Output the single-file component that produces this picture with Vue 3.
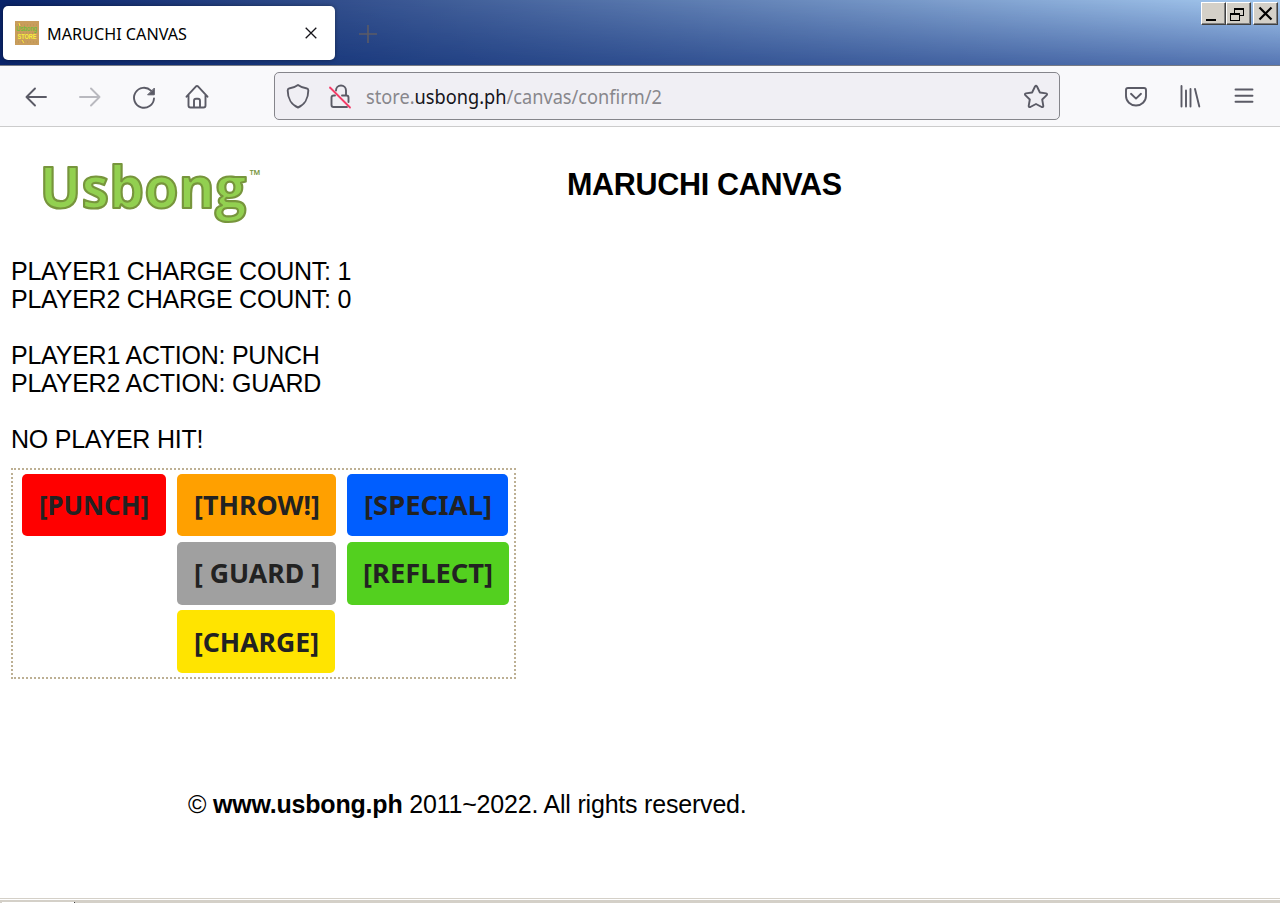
<script setup>
const status = [
  'PLAYER1 CHARGE COUNT: 1',
  'PLAYER2 CHARGE COUNT: 0',
  '',
  'PLAYER1 ACTION: PUNCH',
  'PLAYER2 ACTION: GUARD',
  '',
  'NO PLAYER HIT!',
]
const actions = [
  { id: 'punch', label: '[PUNCH]', width: 110 },
  { id: 'throw', label: '[THROW!]', width: 126 },
  { id: 'special', label: '[SPECIAL]', width: 128 },
  { id: 'guard', label: '[ GUARD ]', width: 126 },
  { id: 'reflect', label: '[REFLECT]', width: 130 },
  { id: 'charge', label: '[CHARGE]', width: 125 },
]
</script>

<template>
  <div class="window">
    <header class="titlebar">
      <div class="tab">
        <svg class="favicon" width="24" height="24" viewBox="0 0 24 24">
          <rect width="24" height="24" fill="#c99d5c" />
          <path d="M0 4h24M2 12h20M0 21h24" stroke="#b9924f" stroke-dasharray="1 2" />
          <text x="1" y="10" font-size="8" textLength="21" lengthAdjust="spacingAndGlyphs" fill="#55c531">Usbong</text>
          <text x="2.500" y="18" font-size="8" font-weight="700" textLength="19" lengthAdjust="spacingAndGlyphs" fill="#f8f03a">STORE</text>
          <path d="M4 2l1 3M7 19l2 3" stroke="#f8e83a" />
        </svg>
        <svg class="tab-title" width="144" height="26"><text x="0" y="20" textLength="140" lengthAdjust="spacingAndGlyphs">MARUCHI CANVAS</text></svg>
        <svg class="tab-close" width="12" height="12" viewBox="0 0 12 12"><path d="M.7.7l10.600 10.600M11.300.7L.7 11.300" stroke="#15141a" stroke-width="1.300" /></svg>
      </div>
      <svg class="new-tab" width="18" height="18" viewBox="0 0 18 18"><path d="M9 0v18M0 9h18" stroke="#5b5b66" stroke-width="1.600" /></svg>
      <div class="controls">
        <span class="control"><svg width="23" height="21"><path d="M4 16h10v2H4z" /></svg></span>
        <span class="control"><svg width="23" height="21" shape-rendering="crispEdges"><path d="M7 5h10v2H7zM7 7h1v3H7zM16 7h1v6h-1zM13 12h4v1h-4zM3 10h10v2H3zM3 12h1v6H3zM12 12h1v6h-1zM3 17h10v1H3z" /></svg></span>
        <span class="control close"><svg width="23" height="21"><path d="M5.500 4.500l12 12M17.500 4.500l-12 12" stroke="#000" stroke-width="2.200" /></svg></span>
      </div>
    </header>

    <nav class="toolbar">
      <div class="nav-icons">
        <svg width="24" height="24" viewBox="0 0 24 24"><path d="M22 12H2.500M11 3.500L2.500 12l8.500 8.500" /></svg>
        <svg class="disabled" width="24" height="24" viewBox="0 0 24 24"><path d="M2 12h19.500M13 3.500l8.500 8.500-8.500 8.500" /></svg>
        <svg width="24" height="24" viewBox="0 0 24 24"><path d="M22 13.500A10 10 0 1 1 19 5.600" /><path d="M22.300 3.500v6.300H16z" class="solid" /></svg>
        <svg class="home" width="24" height="24" viewBox="0 0 24 24"><path d="M1.500 11.700L10.800 1.600q1.200-1 2.400 0l9.300 10.100M3.500 10.200v10.300q0 2 2 2h13q2 0 2-2V10.200M9 22v-6.200q0-2 2-2h2q2 0 2 2V22" /></svg>
      </div>
      <div class="address">
        <svg width="24" height="26" viewBox="0 0 24 26"><path d="M12 2q-4 3-9 3.500Q1.700 5.700 1.700 7.500c0 8 4 14.500 10.300 17 6.300-2.500 10.300-9 10.300-17 0-1.800-1.300-2-1.300-2Q16 5 12 2z" /></svg>
        <svg class="lock" width="24" height="26" viewBox="0 0 24 26"><path d="M8 7.500a5 5 0 0 1 10 0v4.500M14 12.500h4.500q2 0 2 2V19M7 12.500H6q-2.500 0-2.500 2V22q0 2 2 2H19" /><path d="M2 4.500l20 20" class="slash" /></svg>
        <svg class="url" width="300" height="32"><text x="0" y="24" textLength="296" lengthAdjust="spacingAndGlyphs">store.<tspan fill="#15141a">usbong.ph</tspan>/canvas/confirm/2</text></svg>
        <svg class="star" width="26" height="26" viewBox="0 0 26 26"><path d="M12 3.500q1-1.500 2 0l2.900 6 6.200.9q1.600.4.600 1.700l-4.500 4.400 1.100 6.400q0 1.600-1.600 1.100L13 21l-5.700 3q-1.600.5-1.600-1.100l1.100-6.400-4.500-4.400q-1-1.300.6-1.700l6.200-.9z" /></svg>
      </div>
      <div class="menu-icons">
        <svg width="24" height="24" viewBox="0 0 24 24"><path d="M4 4h16q2 0 2 2v6a10 9.500 0 0 1-20 0V6q0-2 2-2zM7 9.800l5 4.800 5-4.800" /></svg>
        <svg width="24" height="24" viewBox="0 0 24 24"><path d="M3.500 2v20.500M8 6.500v16M12.500 5v17.500M17 5l4.300 17.500" /></svg>
        <svg width="24" height="24" viewBox="0 0 24 24"><path d="M3.500 5.500h17M3.500 11.700h17M3.500 17.800h17" /></svg>
      </div>
    </nav>

    <main class="page">
      <div class="masthead">
        <svg class="logo" width="244" height="90">
          <text class="wordmark" x="19.500" y="63" textLength="207" lengthAdjust="spacingAndGlyphs">Usbong</text>
          <text class="trademark" x="229.500" y="35" textLength="11" lengthAdjust="spacingAndGlyphs">™</text>
        </svg>
        <h1>MARUCHI CANVAS</h1>
      </div>
      <div class="status">
        <p v-for="(line, i) in status" :key="i">{{ line }}</p>
      </div>
      <div class="actions">
        <button v-for="a in actions" :key="a.id" :class="['action', a.id]">
          <svg :width="a.width" height="38"><text x="0" y="29" :textLength="a.width" lengthAdjust="spacingAndGlyphs" xml:space="preserve">{{ a.label }}</text></svg>
        </button>
      </div>
      <footer>© <b>www.usbong.ph</b> 2011~2022. All rights reserved.</footer>
    </main>
    <div class="taskbar"><span></span></div>
  </div>
</template>

<style>
body { margin: 0; overflow: hidden; }
</style>

<style scoped>
* { box-sizing: border-box; }
svg { display: block; flex: none; overflow: visible; }
.window { width: 1280px; height: 903px; display: flex; flex-direction: column; overflow: hidden; background: #fff; font-family: "Liberation Sans", Arial, sans-serif; color: #000; }
.titlebar { position: relative; isolation: isolate; height: 66px; flex: none; display: flex; align-items: flex-start; border-bottom: 1px solid #777b85; background: linear-gradient(90deg, #0a246a, #a6caf0); }
.titlebar::before { content: ""; position: absolute; inset: 0; z-index: -1; background: linear-gradient(90deg, #0a246a, #1b3a7d 26%, #5575b2); mask-image: linear-gradient(transparent, #000); }
.tab { width: 332px; height: 54px; margin: 6px 0 0 3px; padding: 0 18.500px 0 12px; display: flex; align-items: center; background: #fff; border-radius: 5px; box-shadow: 0 0 4px #0006; }
.tab-title { margin-left: 8px; font: 16.500px "Noto Sans", sans-serif; }
.tab-close { margin-left: auto; }
.new-tab { margin: 25px 0 0 23.500px; }
.controls { display: flex; margin: 2px 2px 0 auto; }
.control { width: 25px; height: 23px; background: #d4d0c8; border: 1px solid; border-color: #fff #404040 #404040 #fff; box-shadow: inset -1px -1px #808080; }
.control.close { margin-left: 2px; }
.toolbar { height: 61px; flex: none; display: flex; align-items: center; background: #f9f9fb; border-bottom: 1px solid #ccc; }
.toolbar svg path { fill: none; stroke: #5b5b66; stroke-width: 1.900; stroke-linecap: round; stroke-linejoin: round; }
.toolbar svg path.solid { fill: #5b5b66; stroke-width: 1; }
.nav-icons { display: flex; gap: 30px; margin-left: 24px; padding-top: 2px; }
.nav-icons .disabled { opacity: .4; }
.nav-icons .home { margin-left: -1px; }
.address { width: 786px; height: 48px; margin: 0 0 1px 65px; padding: 0 10px 0 11px; border: 1px solid #85858b; border-radius: 5px; background: #f0eff4; display: flex; align-items: center; }
.lock { margin-left: 18px; }
.toolbar .lock path.slash { stroke: #f43b67; stroke-width: 1.800; }
.url { margin-left: 14px; font: 20px "Noto Sans", sans-serif; }
.url text { fill: #88878c; }
.star { margin-left: auto; }
.menu-icons { display: flex; gap: 30px; margin-left: 64px; }
.page { flex: 1; padding: 18px 11px 0; }
.masthead { display: flex; height: 112px; }
.logo { margin-left: 9px; }
.wordmark { font: 700 57.500px "Open Sans", sans-serif; fill: #92d050; stroke: #77953c; stroke-width: 2.200; stroke-linejoin: round; }
.trademark { font: 700 14px "Open Sans", sans-serif; fill: #77953c; }
h1 { margin: 21px 0 0 303px; font-size: 30.500px; line-height: 36px; letter-spacing: -.3px; white-space: nowrap; }
.status { font-size: 25px; line-height: 28px; letter-spacing: -.23px; }
.status p { margin: 0; height: 28px; }
.actions { width: 505px; height: 211px; margin-top: 15px; padding: 4px 0 0 9px; border: 2px dotted #bdb094; display: grid; grid-template-columns: 144px 159px 162px; grid-template-rows: 62px 63px 63px; column-gap: 11px; row-gap: 5.500px; }
.action { border: 0; border-radius: 5px; padding: 0; display: flex; align-items: center; justify-content: center; font: 700 26px "Noto Sans", sans-serif; }
.action text { fill: #222; }
.punch { background: #f00; }
.throw { background: #ffa000; }
.special { background: #005eff; width: 161px; }
.guard { background: #a0a0a0; grid-column: 2; }
.reflect { background: #53d01f; }
.charge { background: #ffe400; grid-column: 2; width: 158px; }
footer { margin: 110px 0 0 177px; font-size: 25px; line-height: 30px; letter-spacing: -.2px; }
.taskbar { height: 5px; flex: none; background: #d4d0c8; border-top: 1px solid #d4d0c8; box-shadow: inset 0 1px #fff; display: flex; align-items: flex-end; }
.taskbar span { width: 73px; height: 1px; margin-left: 2px; background: #fff; border-right: 1px solid #404040; }
</style>
